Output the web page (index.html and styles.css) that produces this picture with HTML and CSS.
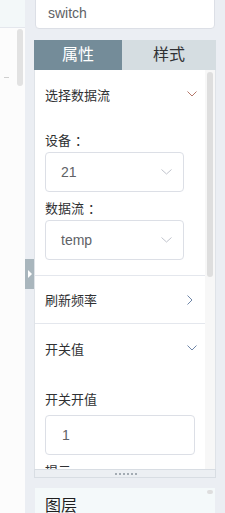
FILE: index.html
```html
<!DOCTYPE html>
<html lang="zh">
<head>
<meta charset="utf-8">
<title>switch</title>
<link rel="stylesheet" href="styles.css">
</head>
<body>
<div class="left">
  <div class="left-top"></div>
  <div class="left-body">
    <div class="left-content"><div class="dash"></div></div>
    <div class="left-track"><div class="left-thumb"></div></div>
  </div>
</div>
<div class="strip">
  <div class="toggle"><span class="tri"></span></div>
</div>
<div class="main">
  <div class="name-input">switch</div>
  <div class="tabs">
    <div class="tab active">属性</div>
    <div class="tab">样式</div>
  </div>
  <div class="panel">
    <div class="panel-content">
      <div class="sec">
        <div class="sec-head">
          <span>选择数据流</span>
          <svg class="chev warm" width="10" height="6" viewBox="0 0 10 6"><polyline points="0.5,0.5 5,5 9.5,0.5" fill="none" stroke="currentColor" stroke-width="1"/></svg>
        </div>
        <div class="sec-body first">
          <div class="label">设备<span class="colon">：</span></div>
          <div class="select"><span>21</span>
            <svg class="sel-chev" width="11" height="6" viewBox="0 0 11 6"><polyline points="0.5,0.5 5.5,5 10.5,0.5" fill="none" stroke="currentColor" stroke-width="1"/></svg>
          </div>
          <div class="label">数据流<span class="colon">：</span></div>
          <div class="select"><span>temp</span>
            <svg class="sel-chev" width="11" height="6" viewBox="0 0 11 6"><polyline points="0.5,0.5 5.5,5 10.5,0.5" fill="none" stroke="currentColor" stroke-width="1"/></svg>
          </div>
        </div>
      </div>
      <div class="sec">
        <div class="sec-head short">
          <span>刷新频率</span>
          <svg class="chev cool" width="6" height="10" viewBox="0 0 6 10"><polyline points="0.5,0.5 5,5 0.5,9.5" fill="none" stroke="currentColor" stroke-width="1"/></svg>
        </div>
      </div>
      <div class="sec open">
        <div class="sec-head">
          <span>开关值</span>
          <svg class="chev cool" width="10" height="6" viewBox="0 0 10 6"><polyline points="0.5,0.5 5,5 9.5,0.5" fill="none" stroke="currentColor" stroke-width="1"/></svg>
        </div>
        <div class="sec-body second">
          <div class="label">开关开值</div>
          <div class="text-input">1</div>
          <div class="label">提示</div>
        </div>
      </div>
    </div>
    <div class="panel-track"><div class="panel-thumb"></div></div>
  </div>
  <div class="resize">
    <span class="dot"></span><span class="dot"></span><span class="dot"></span><span class="dot"></span><span class="dot"></span><span class="dot"></span>
  </div>
  <div class="layers">
    <div class="layers-title">图层</div>
    <div class="layers-thumb"></div>
  </div>
</div>
</body>
</html>
```

FILE: styles.css
```css
* { box-sizing: border-box; }
html, body { margin: 0; padding: 0; }
body {
  width: 225px;
  height: 513px;
  overflow: hidden;
  display: flex;
  background: #ebeef3;
  font-family: "Liberation Sans", "Noto Sans CJK SC", sans-serif;
  color: #303133;
}
.left {
  width: 25px;
  flex: none;
  display: flex;
  flex-direction: column;
  background: #fcfcfc;
}
.left-top {
  height: 28px;
  background: #f3f8f9;
  border-bottom: 1px solid #e4e7ed;
}
.left-body { flex: 1; display: flex; }
.left-content { width: 17px; padding-top: 49px; }
.dash { width: 5px; height: 1px; margin-left: 4px; background: #cfcfcf; }
.left-track { width: 8px; padding-top: 1px; }
.left-thumb { width: 6px; height: 57px; border-radius: 3px; background: #e2e2e2; }

.strip {
  width: 9px;
  flex: none;
  padding-top: 259px;
}
.toggle {
  height: 30px;
  background: #a9b6bd;
  display: flex;
  align-items: center;
  justify-content: center;
}
.tri {
  width: 0; height: 0;
  border-left: 4px solid #fff;
  border-top: 4px solid transparent;
  border-bottom: 4px solid transparent;
  margin-left: 1px;
}

.main {
  width: 182px;
  flex: none;
  display: flex;
  flex-direction: column;
}
.name-input {
  margin-top: -11px;
  height: 40px;
  flex: none;
  background: #fff;
  border: 1px solid #dcdfe6;
  border-radius: 4px;
  padding: 13px 0 0 12px;
  font-size: 14px;
  line-height: 20px;
  color: #606266;
  margin-left: 1px;
  margin-right: 1px;
}
.tabs {
  margin-top: 11px;
  height: 30px;
  flex: none;
  display: flex;
}
.tab {
  flex: 1;
  text-align: center;
  font-size: 16px;
  line-height: 30px;
  background: #d5dde1;
  color: #303133;
}
.tab.active {
  flex: none;
  width: 88px;
  background: #748c99;
  color: #fff;
}
.panel {
  height: 399px;
  flex: none;
  display: flex;
  background: #fff;
  border-left: 1px solid #dfe3e8;
  border-right: 1px solid #dfe3e8;
}
.panel-content {
  flex: 1;
  overflow: hidden;
  font-size: 13px;
}
.panel-track {
  width: 10px;
  flex: none;
  background: #f7f7f7;
  padding: 2px 2px 0 2px;
}
.panel-thumb {
  width: 6px;
  height: 205px;
  border-radius: 3px;
  background: #dedede;
}
.sec { border-bottom: 1px solid #e4e7ed; }
.sec.open { border-bottom: none; }
.sec-head {
  height: 48px;
  display: flex;
  align-items: center;
  justify-content: space-between;
  padding: 0 8px 0 10px;
  color: #303133;
}
.sec-head.short { height: 47px; padding-right: 12px; }
.chev.warm { color: #b5786a; }
.chev.cool { color: #6f86a8; }
.sec-body { padding-left: 10px; }
.sec-body.first { padding-top: 13px; padding-bottom: 15px; }
.sec-body.second { padding-top: 18px; }
.label { line-height: 20px; height: 20px; color: #303133; }
.colon { padding-left: 4px; }
.select {
  width: 139px;
  height: 40px;
  border: 1px solid #dcdfe6;
  border-radius: 4px;
  display: flex;
  align-items: center;
  justify-content: space-between;
  padding: 0 11px 0 15px;
  font-size: 14px;
  color: #606266;
  margin-bottom: 7px;
  margin-top: 1px;
}
.sec-body .select:last-child { margin-bottom: 0; }
.sel-chev { color: #c0c4cc; }
.text-input {
  width: 150px;
  height: 40px;
  border: 1px solid #dcdfe6;
  border-radius: 4px;
  display: flex;
  align-items: center;
  padding-left: 16px;
  font-size: 14px;
  color: #606266;
  margin-top: 5px;
  margin-bottom: 7px;
}
.resize {
  height: 9px;
  flex: none;
  background: #eceff3;
  border: 1px solid #d8dde3;
  display: flex;
  align-items: center;
  justify-content: center;
  gap: 2px;
  padding-left: 1px;
}
.dot { width: 2px; height: 2px; background: #a3abb3; }
.layers {
  margin: 10px 1px 0 1px;
  flex: 1;
  background: #f4f9fa;
  display: flex;
  justify-content: space-between;
  align-items: flex-start;
  padding: 6px 2px 0 10px;
}
.layers-title { font-size: 16px; line-height: 24px; color: #1f1f1f; }
.layers-thumb { width: 6px; height: 4px; margin-top: -4px; border-radius: 2px; background: #dedede; }
```
